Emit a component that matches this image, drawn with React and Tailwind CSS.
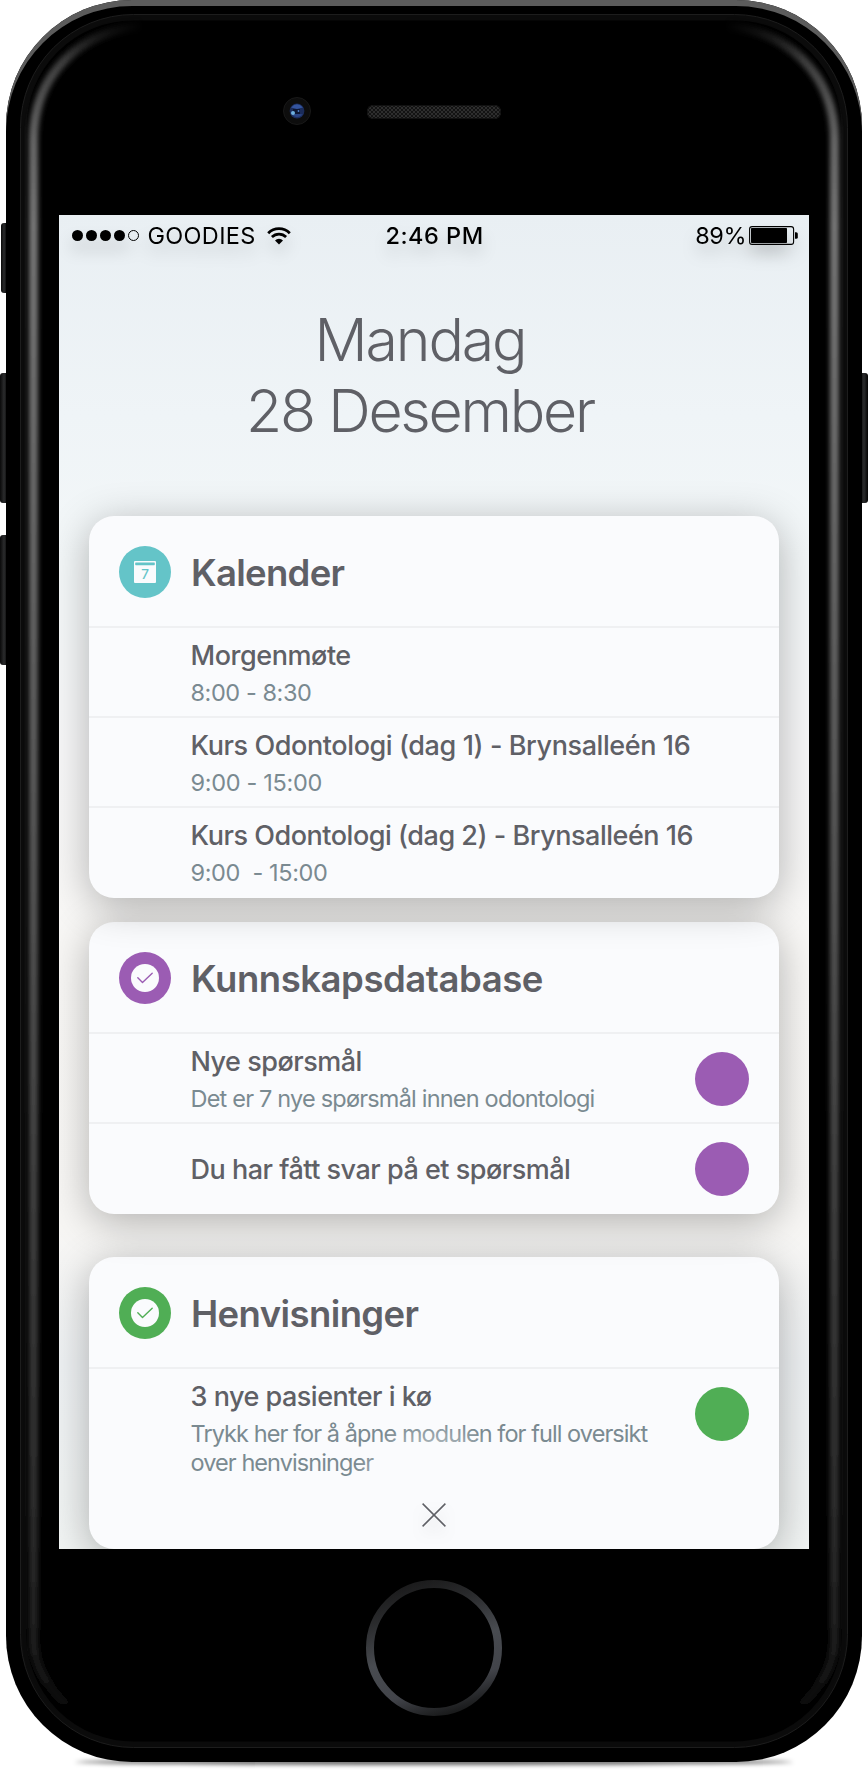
import React from "react";

function StatusBar() {
  return (
    <div className="flex h-[41px] items-center pl-[13px] pr-[10px] text-[23.5px] leading-none text-black">
      <div className="flex w-[270px] items-center drop-shadow-[0_10px_8px_rgba(0,0,0,0.16)]">
        <div className="flex gap-[3px]">
          <i className="size-[11px] rounded-full bg-black" />
          <i className="size-[11px] rounded-full bg-black" />
          <i className="size-[11px] rounded-full bg-black" />
          <i className="size-[11px] rounded-full bg-black" />
          <i className="size-[11px] rounded-full border border-black" />
        </div>
        <span className="ml-[8.5px] tracking-[0.3px]">GOODIES</span>
        <svg className="ml-[11px]" width="24" height="18" viewBox="0 0 24 18">
          <path d="M1.2 6.2A15.2 15.2 0 0 1 22.8 6.2" fill="none" stroke="#000" strokeWidth="2.8" />
          <path d="M4.9 10A10 10 0 0 1 19.1 10" fill="none" stroke="#000" strokeWidth="2.7" />
          <path d="M8 13.4a5.6 5.6 0 0 1 8 0L12 17.6z" fill="#000" />
        </svg>
      </div>
      <div className="flex-1 pl-[43.5px] font-medium tracking-[0.5px] drop-shadow-[0_10px_8px_rgba(0,0,0,0.16)]">2:46 PM</div>
      <div className="flex items-center drop-shadow-[0_10px_8px_rgba(0,0,0,0.18)]">
        <span className="tracking-[-0.5px]">89%</span>
        <svg className="ml-[3px]" width="50" height="19" viewBox="0 0 50 19">
          <rect x="0.6" y="0.6" width="44" height="17.8" rx="2.5" fill="none" stroke="#000" strokeWidth="1.1" />
          <rect x="2" y="2" width="36" height="15" rx="0.8" fill="#000" />
          <path d="M46 6.2h1.2q1.6 0 1.6 1.6v3.4q0 1.6-1.6 1.6H46z" fill="#000" />
        </svg>
      </div>
    </div>
  );
}

function CalendarIcon() {
  return (
    <svg width="52" height="52" viewBox="0 0 52 52">
      <circle cx="26" cy="26" r="26" fill="#64c4c8" />
      <rect x="15" y="15" width="22" height="22" rx="1" fill="#fafbfd" />
      <rect x="16.2" y="16.4" width="19.6" height="2.8" rx="0.6" fill="#64c4c8" />
      <text x="26.2" y="33.2" textAnchor="middle" fontSize="13.5" fontWeight="500" fill="#64c4c8">7</text>
    </svg>
  );
}

function CheckIcon({ color }) {
  return (
    <svg width="52" height="52" viewBox="0 0 52 52">
      <circle cx="26" cy="26" r="26" fill={color} />
      <circle cx="26" cy="26" r="14" fill="#fafbfd" />
      <path d="M18.8 25.8L23.5 30.5L33.2 21.3" fill="none" stroke={color} strokeWidth="1.4" strokeLinecap="round" strokeLinejoin="round" />
    </svg>
  );
}

function Row({ title, titleClass, lines = [], dot, className = "h-[90px]" }) {
  return (
    <div className={`flex border-t-2 border-[#eff0f2] pl-[101.5px] pr-[30px] ${className}`}>
      <div className={lines.length ? "flex-1 pt-[13px]" : "flex flex-1 items-center pt-[2px]"}>
        <div className={`text-[27px] leading-[30px] font-medium text-[#5f6066] ${titleClass}`}>{title}</div>
        {lines.length > 0 && (
          <div className="pt-[7px]">
            {lines.map((l) => (
              <div key={l.text} className={`text-[23.5px] leading-[29px] whitespace-pre text-[#7a8a91] ${l.className}`}>
                {l.text}
              </div>
            ))}
          </div>
        )}
      </div>
      {dot && <div className={`mt-[18px] size-[54px] rounded-full ${dot}`} />}
    </div>
  );
}

function Card({ icon, title, titleClass, className, children }) {
  return (
    <section className={`relative mx-[30px] rounded-[25px] bg-[#fafbfd] shadow-[0_8px_40px_rgba(0,0,0,0.29)] ${className}`}>
      <header className="flex h-[110px] pt-[30px] pl-[30px]">
        {icon}
        <h2 className={`ml-[20px] text-[36.5px] leading-[55px] font-semibold text-[#5f6066] ${titleClass}`}>{title}</h2>
      </header>
      {children}
    </section>
  );
}

function SideButton({ className }) {
  return <div className={`absolute bg-linear-to-r from-[#0a0a0a] via-[#2b2c2d] to-[#050505] ${className}`} />;
}

function FrameGloss() {
  return (
    <svg className="absolute inset-0" width="856" height="1762" viewBox="6 0 856 1762">
      <defs>
        <linearGradient id="gloss" gradientUnits="userSpaceOnUse" x1="0" y1="20" x2="0" y2="1725">
          <stop offset="0" stopColor="#1c1c1c" />
          <stop offset="0.03" stopColor="#444" />
          <stop offset="0.07" stopColor="#686868" />
          <stop offset="0.12" stopColor="#787878" />
          <stop offset="0.35" stopColor="#646464" />
          <stop offset="0.55" stopColor="#505050" />
          <stop offset="0.72" stopColor="#3c3c3c" />
          <stop offset="0.88" stopColor="#2c2c2c" />
          <stop offset="0.95" stopColor="#1e1e1e" />
          <stop offset="0.975" stopColor="#121212" />
          <stop offset="0.995" stopColor="#000" />
        </linearGradient>
        <linearGradient id="fade" gradientUnits="userSpaceOnUse" x1="0" y1="0" x2="868" y2="0">
          <stop offset="0.075" stopColor="#fff" />
          <stop offset="0.165" stopColor="#000" />
          <stop offset="0.835" stopColor="#000" />
          <stop offset="0.925" stopColor="#fff" />
        </linearGradient>
        <mask id="ends" maskUnits="userSpaceOnUse" x="0" y="0" width="868" height="1771">
          <rect width="868" height="1771" fill="url(#fade)" />
        </mask>
        <filter id="soft" filterUnits="userSpaceOnUse" x="0" y="0" width="868" height="1771">
          <feGaussianBlur stdDeviation="2.4" />
        </filter>
      </defs>
      <rect x="23.5" y="17.5" width="821" height="1727" rx="110" fill="none" stroke="#0b0b0b" strokeWidth="6" />
      <rect x="20.5" y="14.5" width="827" height="1733" rx="113" fill="none" stroke="#1d1d1d" strokeWidth="1" />
      <g mask="url(#ends)">
        <g fill="none" stroke="url(#gloss)" strokeWidth="9" filter="url(#soft)">
          <path d="M150 25C78 29 33.5 76 33.5 140V1640C33.5 1670 55 1705 100 1726" />
          <path d="M718 25C790 29 834.5 76 834.5 140V1640C834.5 1670 813 1705 768 1726" />
        </g>
      </g>
    </svg>
  );
}

function Camera() {
  return (
    <svg width="28" height="28" viewBox="0 0 28 28">
      <circle cx="14" cy="14" r="13.5" fill="#0d0d0d" stroke="#191919" />
      <circle cx="14" cy="14" r="7.4" fill="#1b2c5a" />
      <path d="M8 10.5Q14 4 20 10.5L14 12z" fill="#34549e" />
      <path d="M9 18Q14 22.5 20 17.5L14 16.5z" fill="#2a4484" />
      <path d="M10 12h7v5h-7z" fill="#0d1734" />
      <circle cx="10" cy="16" r="2" fill="#6fb1e0" />
      <circle cx="15.5" cy="14" r="0.9" fill="#4f80c4" />
    </svg>
  );
}

function Speaker() {
  return (
    <svg width="134" height="14" viewBox="0 0 134 14">
      <defs>
        <pattern id="mesh" width="4" height="4" patternUnits="userSpaceOnUse">
          <rect width="4" height="4" fill="#131313" />
          <rect width="2" height="2" fill="#2e2e2e" />
          <rect x="2" y="2" width="2" height="2" fill="#2e2e2e" />
        </pattern>
      </defs>
      <rect width="134" height="14" rx="6" fill="url(#mesh)" />
      <rect x="0.5" y="0.5" width="133" height="13" rx="6" fill="none" stroke="#111" />
    </svg>
  );
}

function HomeButton() {
  return (
    <svg width="136" height="136" viewBox="0 0 136 136">
      <defs>
        <linearGradient id="ring" x1="0.35" y1="0" x2="0.65" y2="1">
          <stop offset="0" stopColor="#1c1c1d" />
          <stop offset="0.2" stopColor="#2a2b2d" />
          <stop offset="0.5" stopColor="#484b50" />
          <stop offset="0.78" stopColor="#42444a" />
          <stop offset="1" stopColor="#1a1b1c" />
        </linearGradient>
      </defs>
      <circle cx="68" cy="68" r="64" fill="none" stroke="url(#ring)" strokeWidth="8" />
    </svg>
  );
}

export default function App() {
  return (
    <div className="relative h-[1771px] w-[868px] overflow-hidden bg-white px-[6px] font-['Inter','Liberation_Sans',sans-serif]">
      <div className="absolute top-[1759px] left-[75px] h-[6px] w-[718px] rounded-[50%] bg-black/60 blur-[2px]" />
      <SideButton className="top-[223px] left-px h-[70px] w-[6px] rounded-l-[3px]" />
      <SideButton className="top-[373px] left-0 h-[130px] w-[8px] rounded-l-[3px]" />
      <SideButton className="top-[535px] left-0 h-[130px] w-[8px] rounded-l-[3px]" />
      <SideButton className="top-[373px] left-[860px] h-[130px] w-[8px] rounded-r-[3px]" />

      <div className="relative flex h-[1762px] flex-col items-center rounded-[126px] bg-black shadow-[inset_0_6px_0_#5c5c5c]">
        <FrameGloss />
        <div className="relative flex h-[215px] w-full shrink-0 pt-[97px] pl-[277px]">
          <Camera />
          <div className="ml-[56px] pt-[8px]">
            <Speaker />
          </div>
        </div>

        <main className="relative h-[1334px] w-[750px] shrink-0 overflow-hidden bg-[linear-gradient(180deg,#e9eff3_0%,#eff4f7_15%,#f3f7f8_26%,#f7f7f8_40%,#f8f7f5_55%,#f7f6f4_76%,#eef1f3_86%,#f1f4f3_100%)]">
          <StatusBar />
          <h1 className="pt-[48px] pr-[28px] text-center text-[59px] leading-[71px] font-light text-[#5f6066]">
            <span className="block tracking-[-2.15px]">Mandag</span>
            <span className="block tracking-[-2.25px]">28 Desember</span>
          </h1>

          <Card className="z-30 mt-[70px] h-[382px]" icon={<CalendarIcon />} title="Kalender" titleClass="tracking-[-0.7px]">
            <Row title="Morgenmøte" titleClass="tracking-[-0.45px]" lines={[{ text: "8:00 - 8:30", className: "tracking-[-0.43px]" }]} />
            <Row
              title="Kurs Odontologi (dag 1) - Brynsalleén 16"
              titleClass="tracking-[-0.41px]"
              lines={[{ text: "9:00 - 15:00", className: "tracking-[-0.32px]" }]}
            />
            <Row
              title="Kurs Odontologi (dag 2) - Brynsalleén 16"
              titleClass="tracking-[-0.47px]"
              lines={[{ text: "9:00  - 15:00", className: "tracking-[-0.38px]" }]}
            />
          </Card>

          <Card className="z-20 mt-[24px] h-[292px]" icon={<CheckIcon color="#9b5cb3" />} title="Kunnskapsdatabase" titleClass="tracking-[-0.45px]">
            <Row
              title="Nye spørsmål"
              titleClass="tracking-[-0.5px]"
              lines={[{ text: "Det er 7 nye spørsmål innen odontologi", className: "tracking-[-0.8px]" }]}
              dot="bg-[#9b5cb3]"
            />
            <Row title="Du har fått svar på et spørsmål" titleClass="tracking-[-0.5px]" dot="bg-[#9b5cb3]" className="h-[92px]" />
          </Card>

          <Card className="z-10 mt-[43px] h-[292px]" icon={<CheckIcon color="#50ae55" />} title="Henvisninger" titleClass="tracking-[-0.6px]">
            <Row
              title="3 nye pasienter i kø"
              titleClass="tracking-[-0.5px]"
              lines={[
                { text: "Trykk her for å åpne modulen for full oversikt", className: "tracking-[-0.93px]" },
                { text: "over henvisninger", className: "tracking-[-0.93px]" },
              ]}
              dot="bg-[#50ae55]"
              className="h-[150px]"
            />
            <button
              aria-label="Lukk"
              className="absolute bottom-0 left-[245px] flex h-[150px] w-[200px] items-end justify-center bg-[radial-gradient(circle_90px_at_50%_73%,rgba(250,251,253,0.9)_0%,rgba(250,251,253,0.5)_60%,rgba(250,251,253,0)_100%)] pb-[22px]"
            >
              <svg className="drop-shadow-[0_8px_8px_rgba(0,0,0,0.15)]" width="24" height="24" viewBox="0 0 24 24">
                <path d="M0.6 0.6L23.4 23.4M23.4 0.6L0.6 23.4" stroke="#5f6066" strokeWidth="1.5" />
              </svg>
            </button>
          </Card>
        </main>

        <div className="relative pt-[31px]">
          <HomeButton />
        </div>
      </div>
    </div>
  );
}
